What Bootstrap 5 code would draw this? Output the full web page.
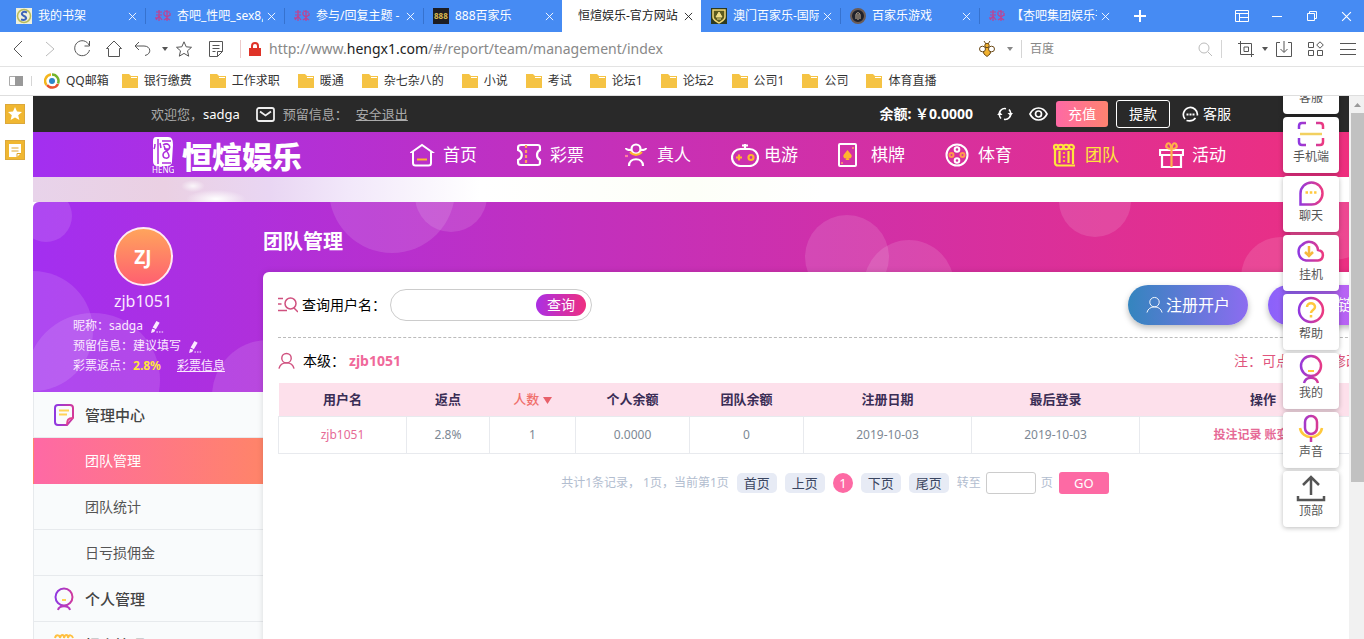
<!DOCTYPE html>
<html lang="zh-CN">
<head>
<meta charset="utf-8">
<meta name="viewport" content="width=device-width, initial-scale=1">
<title>恒煊娱乐-官方网站</title>
<link href="https://cdn.jsdelivr.net/npm/bootstrap@5.3.0/dist/css/bootstrap.min.css" rel="stylesheet">
<style>
:root{--pink:#fd6aa4;--grad:linear-gradient(90deg,#a32ff0,#c230bd 40%,#ee2f7e)}
body{font-family:"Noto Sans","Noto Sans CJK SC",sans-serif;font-size:12px;line-height:20px;color:#333;background:#fff}
svg{display:block;flex:none;fill:none;stroke:currentColor}
button{border:0;background:none;padding:0;color:inherit}
a{color:inherit;text-decoration:none}
/* browser frame */
.tabbar,.toolbar,.marks{flex:none}
.tabbar{height:32px;background:#468bf3;color:#fff;padding-left:6px}
.btab{width:139px;flex:none;padding:0 8px 0 10px;position:relative;white-space:nowrap}
.btab + .btab::before{content:"";position:absolute;left:0;top:8px;height:16px;border-left:1px solid #3672cf}
.btab.current{background:#fff;color:#222;padding-left:16px}
.btab.current::before,.btab.current + .btab::before{display:none}
.btitle{flex:1;min-width:0;overflow:hidden;margin:0 4px 0 6px}
.current .btitle{margin-left:0}
.winbtn{width:35px;height:32px}
.toolbar{height:35px;border-bottom:1px solid #e3e3e3;color:#555}
.toolset{padding-left:2px}
.tbtn{width:32px;height:34px}
.vline{height:18px;border-left:1px solid #d5d5d5}
.vline.rosy{border-color:#eccaca}
.vline.short{height:10px}
.address{font-size:14px;color:#888;width:100%}
.address b{font-weight:400;color:#222}
.engine-caret{color:#888;margin:0 8px 0 12px}
.searchbox{width:172px;border:0;outline:0;padding:0 8px;font-size:12px}
.searchbox::placeholder{color:#888}
.marks{height:29px;border-bottom:1px solid #dedede;color:#333;padding-left:1px}
.mark-item{gap:6px;margin-right:18px}
.mark-item.first{margin-right:13px}
.rail{width:33px;flex:none;padding:8px 0 0 5px;gap:16px}
.rail button{width:20px;height:20px;background:#f0b731;color:#fff;border:1px solid #dca83a}
/* site */
.site{position:relative;overflow:hidden;min-width:0}
.wrap{width:1080px;margin:0 auto}
.topbar{height:36px;background:#292929;color:#aaa;font-size:13px}
.money,.service{font-size:14px}
.btn-cash{width:54px;height:28px;border-radius:3px;font-size:14px;color:#fff}
.btn-cash.fill{width:52px;height:26px;background:linear-gradient(90deg,#fe69a5,#ff8370)}
.btn-cash.line{border:1px solid #fff}
.mainnav{height:45px;background:var(--grad);color:#fff}
.brand-name{font-family:"Noto Sans CJK SC",sans-serif;font-size:30px;font-weight:900;line-height:42px}
.navi{width:107px;font-size:17px;line-height:24px;gap:8px}
.navi.tight{gap:5px}
.navi.last{width:72px}
.navi.on{color:#ffe53b}
.ribbon{height:25px;background:radial-gradient(ellipse 12px 6px at 160px 9px,#fffc,#fff0),radial-gradient(ellipse 30px 9px at 183px 22px,#fff,#fff0),linear-gradient(90deg,#e8d3ea,#ead0e3 10%,#e9d6f3 18%,#f2e8fa 24%,#fff 34%,#fdfff8 50%,#fff 60%)}
.hero{min-width:1370px;position:relative;background:var(--grad) top/100% 190px no-repeat,#fff;border-top-left-radius:6px;overflow:hidden}
.bubbles{position:absolute;left:0;top:0;fill:#fff;fill-opacity:.12;stroke:none}
.side{width:230px;position:relative}
.profile{height:190px;color:#fbeaff;padding-top:25px}
.who{padding-right:10px}
.avatar{width:59px;height:59px;margin:0 auto;border:2px solid #ffe9f3;border-radius:50%;background:linear-gradient(#ffa45c,#ff6070);font-size:19px;font-weight:700;color:#fff}
.pname{font-size:16px;line-height:30px}
.pinfo{padding-left:40px}
.rate{color:#ffe53b}
.menu-row{height:46px;background:#f9fbfc;border-bottom:1px solid #e7eaed;border-left:1px solid #e7eaed;font-size:14px;color:#555;padding-left:51px}
.menu-row.head{font-size:15px;font-weight:500;color:#444;padding-left:20px;gap:11px}
.menu-row.on{background:linear-gradient(90deg,#fe69a5,#ff8469);color:#fff;border-color:#fff0}
.ptitle{height:70px;padding-top:10px;font-size:20px;font-weight:700;color:#fff}
.panel{background:#fff;border-top-left-radius:6px;padding:0 15px;min-height:520px;box-shadow:0 0 6px #0002;font-size:14px}
.rose{color:#d0517f}
.qrow{height:66px;border-bottom:1px dashed #bbb}
.levelrow{height:45px}
.level-name{color:#f0689a}
.note{color:#e0557d}
.qbox{width:202px;height:32px;border:1px solid #ccc;border-radius:16px;padding:0 5px 0 12px}
.qbox input{width:132px;border:0;outline:0}
.qbox button{width:50px;height:22px;border-radius:11px;color:#fff;background:linear-gradient(90deg,#ab2fe4,#ee2f80)}
.pills{gap:20px}
.pill{width:120px;height:40px;border-radius:20px;color:#fff;font-size:16px;box-shadow:0 3px 6px #0004;gap:3px}
.pill.a{background:linear-gradient(90deg,#3485be,#8c6cf0)}
.pill.b{background:linear-gradient(90deg,#8a62fa,#d063f0)}
.grid{table-layout:fixed;width:1109px;margin:0;text-align:center;font-size:12px}
.grid th{height:33px;padding:0;background:#fde0eb;color:#3a2d55;font-size:13px;font-weight:700;border:0;vertical-align:middle}
.grid th.sorted{color:#f0706c;font-weight:500}
.grid td{height:37px;padding:0;border:1px solid #e8eaee;color:#7d8894;vertical-align:middle}
.grid .hot{color:#e66a96}
.w1{width:128px}.w2{width:83px}.w3{width:86px}.w4{width:114px}.w5{width:168px}
.pager{font-size:12px;color:#b2bdcf;padding:18px 0 0 4px}
.pager button{width:40px;height:20px;border-radius:5px;background:#e7ebf5;color:#3a4560;font-size:13px;margin-left:8px}
.pager .cur{width:20px;border-radius:50%;background:var(--pink);color:#fff}
.pager input{width:50px;height:22px;border:1px solid #ccc;border-radius:3px;margin:0 5px}
.pager .go{width:50px;height:22px;border-radius:3px;background:var(--pink);color:#fff;margin-left:6px}
.floats{position:absolute;right:10px;top:-38px;gap:3px}
.floats button{width:56px;height:56px;border-radius:4px;background:#fff;box-shadow:0 1px 5px #0004;color:#555;line-height:18px;padding-bottom:6px}
.floats svg{margin:0 auto}
.sbar{width:15px;flex:none;background:#f1f1f1;padding-left:2px}
.sbar .arrow{height:17px}
.sbar .thumb{height:68%;background:#c1c1c1}
</style>
</head>
<body>
<svg width="0" height="0" class="position-absolute" aria-hidden="true">
  <defs>
    <linearGradient id="gp" gradientUnits="userSpaceOnUse" x1="2" y1="0" x2="26" y2="0"><stop stop-color="#9038e0"/><stop offset="1" stop-color="#ec3a80"/></linearGradient>
    <symbol id="folder" viewBox="0 0 16 14"><path d="M0 0h7l2 2h7v12H0z" fill="#f5c344" stroke="none"/><path d="M9 3.5h6" stroke="#fff"/></symbol>
    <symbol id="close" viewBox="0 0 10 10"><path d="M1 1l8 8M9 1l-8 8"/></symbol>
    <symbol id="caret" viewBox="0 0 6 4"><path d="M0 0h6L3 4z" fill="currentColor" stroke="none"/></symbol>
    <symbol id="fav" viewBox="0 0 16 12"><g stroke="#d8327c" stroke-width="1.2" opacity=".85"><path d="M1 2h6M4 0v11M1 5h6M1 10l3-4 3 4M9 1l6 1M9 5l3 2 3-2M9 10l3-2 3 2M12 0v11M9 2v3M15 3v3M1 7v2"/></g></symbol>
    <symbol id="person" viewBox="0 0 18 18"><circle cx="9" cy="6" r="5"/><path d="M1 17c1-4 4-6 8-6s7 2 8 6"/></symbol>
    <symbol id="pencil" viewBox="0 0 12 12"><path d="M0 12l1-4 3 1-1 2zM1.500 7L5 1l3 1.500-3.500 6z" fill="currentColor" stroke="none"/><path d="M5 11h7" stroke-dasharray="1.4 1"/></symbol>
  </defs>
</svg>

<div class="d-flex flex-column vh-100 overflow-hidden">
  <!-- tabs -->
  <header class="tabbar d-flex">
    <div class="btab d-flex align-items-center"><svg width="16" height="16"><path d="M0 0h16v16H0z" fill="#eef0dc" stroke="none"/><circle cx="8" cy="8" r="6.500" stroke="#b9bb5a" stroke-width="1.500"/><path d="M11 4.500c-5-2-7 2-3 3.500s2 5-3 3.500" stroke="#3c62b8" stroke-width="2"/></svg><span class="btitle">我的书架</span><button aria-label="关闭"><svg width="9" height="9"><use href="#close"/></svg></button></div>
    <div class="btab d-flex align-items-center"><svg width="16" height="12"><use href="#fav"/></svg><span class="btitle">杏吧_性吧_sex8,</span><button aria-label="关闭"><svg width="9" height="9"><use href="#close"/></svg></button></div>
    <div class="btab d-flex align-items-center"><svg width="16" height="12"><use href="#fav"/></svg><span class="btitle">参与/回复主题 -</span><button aria-label="关闭"><svg width="9" height="9"><use href="#close"/></svg></button></div>
    <div class="btab d-flex align-items-center"><svg width="16" height="16"><path d="M0 0h16v16H0z" fill="#1d1d22" stroke="none"/><text x="1" y="11" font-size="8" font-weight="700" fill="#d9b950" stroke="none">888</text></svg><span class="btitle">888百家乐</span><button aria-label="关闭"><svg width="9" height="9"><use href="#close"/></svg></button></div>
    <div class="btab current d-flex align-items-center"><span class="btitle">恒煊娱乐-官方网站</span><button aria-label="关闭"><svg width="9" height="9"><use href="#close"/></svg></button></div>
    <div class="btab d-flex align-items-center"><svg width="16" height="16"><path d="M0 0h16v16H0z" fill="#2d3a1e" stroke="none"/><path d="M2 2h12v7c0 3-3 4-6 6-3-2-6-3-6-6z" fill="#5c5a1f" stroke="#f0d87a" stroke-width="1.500"/><path d="M5 9l3-5 3 5zM6 11h4" fill="#f2df8a" stroke="#f2df8a"/></svg><span class="btitle">澳门百家乐-国际</span><button aria-label="关闭"><svg width="9" height="9"><use href="#close"/></svg></button></div>
    <div class="btab d-flex align-items-center"><svg width="16" height="16"><circle cx="8" cy="8" r="7" fill="#20222c" stroke="#6b5b55" stroke-width="2"/><path d="M6 11V7c0-3 4-3 4 0v4M8 6v6" stroke="#c9b59a"/></svg><span class="btitle">百家乐游戏</span><button aria-label="关闭"><svg width="9" height="9"><use href="#close"/></svg></button></div>
    <div class="btab d-flex align-items-center"><svg width="16" height="12"><use href="#fav"/></svg><span class="btitle">【杏吧集团娱乐平</span><button aria-label="关闭"><svg width="9" height="9"><use href="#close"/></svg></button></div>
    <button class="d-flex align-items-center ps-3" aria-label="新标签"><svg width="12" height="12"><path d="M6 0v12M0 6h12" stroke-width="2"/></svg></button>
    <div class="ms-auto d-flex">
      <button class="winbtn d-flex align-items-center justify-content-center" aria-label="布局"><svg width="14" height="12"><path d="M.5.500h13v11H.5zM.5 3.500h13M4.500 3.500v8M4.500 7.500h9"/></svg></button>
      <button class="winbtn d-flex align-items-center justify-content-center" aria-label="最小化"><svg width="10" height="10"><path d="M0 5.500h10"/></svg></button>
      <button class="winbtn d-flex align-items-center justify-content-center" aria-label="还原"><svg width="10" height="10"><path d="M.5 2.500h7v7h-7zM2.500 2V.5h7v7H8"/></svg></button>
      <button class="winbtn d-flex align-items-center justify-content-center" aria-label="关闭窗口"><svg width="11" height="11"><use href="#close"/></svg></button>
    </div>
  </header>

  <!-- address bar -->
  <div class="toolbar d-flex align-items-center">
    <div class="toolset d-flex">
      <button class="tbtn d-grid" aria-label="后退"><svg class="m-auto" width="10" height="18"><path d="M9 1L1 9l8 8"/></svg></button>
      <button class="tbtn d-grid" aria-label="前进"><svg class="m-auto" width="10" height="16"><path d="M1 1l8 7-8 7" stroke="#bbb"/></svg></button>
      <button class="tbtn d-grid" aria-label="刷新"><svg class="m-auto" width="18" height="18"><path d="M16 5A7.500 7.500 0 1 0 16.500 10M16.500 1v5h-5"/></svg></button>
      <button class="tbtn d-grid" aria-label="主页"><svg class="m-auto" width="16" height="18"><path d="M.5 8.500L8 1l7.500 7.500h-2v8h-11v-8z"/></svg></button>
      <button class="tbtn d-grid" aria-label="撤销"><svg class="me-2 my-auto ms-1" width="18" height="16"><path d="M5 1L1 5l4 4M1 5h9c7 0 8 8 1 9.500"/></svg></button>
      <svg class="my-auto" width="6" height="4"><use href="#caret"/></svg>
      <button class="tbtn d-grid" aria-label="收藏"><svg class="m-auto" width="16" height="16"><path d="M8 .8l2.200 5 5.300.5-4 3.500 1.200 5.400L8 12.400l-4.700 2.800 1.200-5.400-4-3.500 5.300-.5z"/></svg></button>
      <button class="tbtn d-grid" aria-label="笔记"><svg class="m-auto" width="14" height="16"><path d="M.5.500h13v10l-5 5h-8zM13.500 10.500h-5v5M3.500 4.500h7M3.500 7.500h7M3.500 10.500h3"/></svg></button>
    </div>
    <div class="vline rosy ms-2"></div>
    <div class="d-flex align-items-center flex-grow-1 ms-1 ps-1 gap-2">
      <svg width="12" height="14"><path d="M0 6h12v8H0z" fill="#df3328" stroke="none"/><path d="M3 7V4c0-4 6-4 6 0v3" stroke="#df3328" stroke-width="2"/></svg>
      <div class="address">http://www.<b>hengx1.com</b>/#/report/team/management/index</div>
    </div>
    <svg width="16" height="16"><g stroke="#6b4a17"><path d="M5 0l2 3M11 0L9 3"/><path d="M8 5l4 4-1 4-3 2.500L5 13 4 9z" fill="#f2b22e"/><ellipse cx="3.500" cy="8" rx="3" ry="2.800" fill="#fff"/><ellipse cx="12.500" cy="8" rx="3" ry="2.800" fill="#fff"/><circle cx="8" cy="4.500" r="2.200" fill="#f0b02c"/></g></svg>
    <svg class="engine-caret" width="6" height="4"><use href="#caret"/></svg>
    <div class="vline"></div>
    <input class="searchbox" type="text" placeholder="百度" aria-label="搜索">
    <svg width="15" height="15" class="ms-1 text-black-50"><circle cx="6" cy="6" r="5" stroke="#bbb"/><path d="M10 10l4 4" stroke="#bbb"/></svg>
    <div class="vline ms-2"></div>
    <button class="ms-3" aria-label="截图"><svg width="16" height="16"><path d="M0 2.500h13.500V16M2.500 0v13.500H16M6 6h4.500v4.500H6z"/></svg></button>
    <svg class="ms-2" width="6" height="4"><use href="#caret"/></svg>
    <button class="tbtn d-grid" aria-label="下载"><svg class="m-auto" width="16" height="16"><path d="M4 1.500H.5v14h15v-14H12M8 0v11M4.500 8L8 11.500 11.500 8"/></svg></button>
    <button class="tbtn d-grid" aria-label="扩展"><svg class="m-auto" width="16" height="16"><path d="M.5 1.500h5v5h-5zM.5 9.500h5v5h-5zM9.500 9.500h5v5h-5zM12 .8L15.300 4 12 7.200 8.700 4z"/></svg></button>
    <button class="tbtn d-grid" aria-label="菜单"><svg class="m-auto" width="16" height="14"><path d="M0 1.500h16M0 7.500h16M0 12.500h16"/></svg></button>
  </div>

  <!-- bookmarks -->
  <nav class="marks d-flex align-items-center">
    <svg class="ms-2" width="14" height="10"><path d="M.5.500h13v9H.5z" stroke="#aaa"/><path d="M6 0h8v10H6z" fill="#999" stroke="none"/></svg>
    <div class="vline short ms-2 me-1"></div>
    <a href="#" class="mark-item first d-flex align-items-center ms-2"><svg width="16" height="16" stroke-width="2.500"><path d="M8 1.500a6.500 6.500 0 0 1 6 9" stroke="#76b52b"/><path d="M14 11a6.500 6.500 0 0 1-11 1" stroke="#e8542f"/><path d="M2.500 12A6.500 6.500 0 0 1 7 1.500" stroke="#f4b61d"/><circle cx="8" cy="8" r="3" fill="#2d87c9" stroke="none"/></svg>QQ邮箱</a>
    <a href="#" class="mark-item d-flex align-items-center"><svg width="16" height="14"><use href="#folder"/></svg>银行缴费</a>
    <a href="#" class="mark-item d-flex align-items-center"><svg width="16" height="14"><use href="#folder"/></svg>工作求职</a>
    <a href="#" class="mark-item d-flex align-items-center"><svg width="16" height="14"><use href="#folder"/></svg>暖通</a>
    <a href="#" class="mark-item d-flex align-items-center"><svg width="16" height="14"><use href="#folder"/></svg>杂七杂八的</a>
    <a href="#" class="mark-item d-flex align-items-center"><svg width="16" height="14"><use href="#folder"/></svg>小说</a>
    <a href="#" class="mark-item d-flex align-items-center"><svg width="16" height="14"><use href="#folder"/></svg>考试</a>
    <a href="#" class="mark-item d-flex align-items-center"><svg width="16" height="14"><use href="#folder"/></svg>论坛1</a>
    <a href="#" class="mark-item d-flex align-items-center"><svg width="16" height="14"><use href="#folder"/></svg>论坛2</a>
    <a href="#" class="mark-item d-flex align-items-center"><svg width="16" height="14"><use href="#folder"/></svg>公司1</a>
    <a href="#" class="mark-item d-flex align-items-center"><svg width="16" height="14"><use href="#folder"/></svg>公司</a>
    <a href="#" class="mark-item d-flex align-items-center"><svg width="16" height="14"><use href="#folder"/></svg>体育直播</a>
  </nav>

  <div class="d-flex flex-grow-1 overflow-hidden">
    <aside class="rail d-flex flex-column">
      <button class="d-grid" aria-label="收藏夹"><svg class="m-auto" width="14" height="14"><path d="M7 0l2 4.500 5 .5-3.800 3.300L11.400 13 7 10.500 2.600 13l1.200-4.700L0 5l5-.5z" fill="#fff" stroke="none"/></svg></button>
      <button class="d-grid" aria-label="便签"><svg class="m-auto" width="12" height="13"><path d="M0 0h12v9l-4 4H0z" fill="#fff" stroke="none"/><path d="M2.500 4h7M2.500 7h7M8 13V9.500h4" stroke="#e0a52a"/></svg></button>
    </aside>

    <main class="site flex-grow-1">
      <div class="topbar"><div class="wrap h-100 d-flex align-items-center">
        <span>欢迎您，</span><span class="text-white">sadga</span>
        <svg class="mx-3 me-2" width="19" height="15" stroke="#eee"><g stroke="#eee" stroke-width="1.800"><rect x="1" y="1" width="17" height="13" rx="2"/><path d="M4 4.500l5.500 4 5.500-4"/></g></svg>
        <span>预留信息：</span><a href="#" class="ms-2 text-decoration-underline">安全退出</a>
        <div class="ms-auto d-flex align-items-center text-white">
          <b class="money">余额: ￥0.0000</b>
          <button class="ms-4" aria-label="刷新余额"><svg width="16" height="14"><path d="M2.500 8.500A5.500 5.500 0 0 1 9 1.700M13.500 5.500A5.500 5.500 0 0 1 7 12.300M12 2.500a5.500 5.500 0 0 1 1.500 3M4 11.500a5.500 5.500 0 0 1-1.500-3" stroke-width="1.600"/><path d="M10.500 6h5.500l-2.500 3zM0 8h5.500L3 5z" fill="#fff" stroke="none"/></svg></button>
          <button class="mx-3 me-2" aria-label="显示余额"><svg width="19" height="14"><g stroke-width="1.700"><path d="M1 7c4-8 13-8 17 0-4 8-13 8-17 0z"/><circle cx="9.500" cy="7" r="3"/></g></svg></button>
          <button class="btn-cash fill me-2">充值</button>
          <button class="btn-cash line">提款</button>
          <a href="#" class="service d-flex align-items-center ms-2 ps-1 gap-1"><svg width="17" height="16"><path d="M3 13A7 7 0 1 1 15.300 9.500M13.500 12c-2 2.500-5 3.500-9 2.500" stroke-width="1.700"/><path d="M4.500 8.500h2M7.500 8.500h2M10.500 8.500h2" stroke-width="2"/></svg>客服</a>
        </div>
      </div></div>

      <div class="mainnav"><div class="wrap h-100 d-flex align-items-center">
        <a href="#" class="d-flex align-items-center gap-2">
          <svg width="23" height="38"><path d="M5 1h12c4 0 5 3 5 8l-1 16c0 4-2 5-6 5H7c-4 0-5-2-5-6V8c0-4 0-7 3-7z" fill="#fff" stroke="none"/><g stroke="#ad2fdc" stroke-width="1.500"><path d="M7 3v25M4 8c0 3-1 5-1 5M9 7l1 5M11 5h9M11 27h9M12 9c5-3 8 1 6 4s-6 2-6 6 6 4 6 1-4-6-5-10M13 13h5"/></g><text x="1" y="37" font-size="8" fill="#fff" stroke="none">HENG</text></svg>
          <span class="brand-name">恒煊娱乐</span></a>
        <nav class="ms-auto d-flex">
          <a href="#" class="navi d-flex align-items-center"><svg width="25" height="24" stroke-width="2"><path d="M2 9l10-7 10 7h-1v11c0 2-1 2.500-2.500 2.500h-13C4 22.500 3 22 3 20V9z"/><path d="M7 16.500h10" stroke="#ffb52e"/></svg>首页</a>
          <a href="#" class="navi d-flex align-items-center"><svg width="25" height="24" stroke-width="2.200"><path d="M4 2h17c2 0 2 1 2 5-4 2-4 8 0 10 0 4 0 5-2 5H4c-3 0-3-1-3-5 5-2 5-8 0-10 0-4 0-5 3-5z"/><path d="M9 2v20" stroke="#ffa060" stroke-dasharray="3 2"/></svg>彩票</a>
          <a href="#" class="navi d-flex align-items-center"><svg width="25" height="24" stroke-width="2.200"><circle cx="12" cy="6" r="4.500"/><path d="M2 5c0 2 3 2 5 2M22 5c0 2-3 2-5 2M5 23c0-9 14-9 14 0"/><path d="M6 9c4 4 8 4 12 0" stroke="#ffb52e"/><path d="M1 13h3" stroke="#ff7fa0"/></svg>真人</a>
          <a href="#" class="navi tight d-flex align-items-center"><svg width="28" height="24" stroke-width="2.200"><rect x="1" y="6" width="26" height="17" rx="8.500"/><path d="M14 6V1M11 2.500h6"/><path d="M5 14.500h6M8 11.500v6" stroke="#ffb52e"/><circle cx="20" cy="14.500" r="2.500" stroke="#ffb52e"/></svg>电游</a>
          <a href="#" class="navi d-flex align-items-center"><svg width="25" height="24" stroke-width="2"><rect x="1" y="1" width="17" height="22" rx="1"/><path d="M9.500 7l4 5c1 3-2 4-3 3l1 2h-4l1-2c-1 1-4 0-3-3z" fill="#ffb52e" stroke="none"/><path d="M15 4v2M4 19v2" stroke="#ff9c6a" stroke-width="1.500"/></svg>棋牌</a>
          <a href="#" class="navi d-flex align-items-center"><svg width="25" height="24" stroke-width="2"><circle cx="12" cy="12" r="10.500"/><circle cx="12" cy="6.500" r="2.300"/><circle cx="12" cy="17.500" r="2.300"/><g stroke="#ff9a4e"><circle cx="6.500" cy="12" r="2"/><circle cx="17.500" cy="12" r="2"/></g></svg>体育</a>
          <a href="#" class="navi on d-flex align-items-center"><svg width="25" height="24" stroke-width="2.200"><path d="M3 6v14c0 1 1 2.500 3 2.500h17M21 6v15M2 4c0-3 4-3 4 0 0-3 5-3 5.500 0 0-3 5-3 5.500 0 0-3 4-3 5 0 0 3-4 3-5 0 0 3-5 3-5.500 0C11 7 6 7 6 4c0 3-4 3-4 0M7.500 8v12M16.500 8v12"/><path d="M12 9v12" stroke="#ffb52e" stroke-dasharray="2 2"/></svg>团队</a>
          <a href="#" class="navi last d-flex align-items-center"><svg width="25" height="26" stroke-width="2.200"><path d="M1 8h23v5H1zM3 13v12h19V13"/><path d="M12.500 7v18M12.500 7C8 7 6 5 8 2c2-2 4 0 4.500 5 .5-5 2.500-7 4.500-5 2 3 0 5-4.500 5z" stroke="#ffb04a"/></svg>活动</a>
        </nav>
      </div></div>
      <div class="ribbon"></div>

      <div class="hero">
        <svg class="bubbles" width="1370" height="190"><circle cx="13" cy="14" r="26"/><circle cx="0" cy="129" r="60"/><circle cx="60" cy="178" r="67"/><circle cx="235" cy="194" r="56"/><circle cx="359" cy="-12" r="63"/><circle cx="418" cy="-6" r="36"/><circle cx="814" cy="55" r="42"/><circle cx="876" cy="83" r="45"/><circle cx="1062" cy="-1" r="36"/><circle cx="1248" cy="75" r="40"/><circle cx="1300" cy="10" r="48"/></svg>
        <div class="d-flex">
          <div class="side">
            <div class="profile">
              <div class="who text-center">
                <div class="avatar d-flex align-items-center justify-content-center">ZJ</div>
                <div class="pname">zjb1051</div>
              </div>
              <div class="pinfo">
                <div class="d-flex align-items-center">昵称：sadga<button class="ms-2" aria-label="修改昵称"><svg width="13" height="13"><use href="#pencil"/></svg></button></div>
                <div class="d-flex align-items-center">预留信息：建议填写<button class="ms-2" aria-label="修改预留信息"><svg width="13" height="13"><use href="#pencil"/></svg></button></div>
                <div>彩票返点：<b class="rate">2.8%</b><a href="#" class="ms-3 text-decoration-underline">彩票信息</a></div>
              </div>
            </div>
            <a href="#" class="menu-row head d-flex align-items-center"><svg width="20" height="22" stroke-width="2"><path d="M4 1h12c2 0 3 1 3 3v10l-6 7H4c-2 0-3-1-3-3V4c0-2 1-3 3-3z" stroke="url(#gp)"/><path d="M13 21c0-5 1-7 6-7" stroke="#e0408e"/><path d="M5 6.500h10M5 10.500h8" stroke="#ffd257"/></svg>管理中心</a>
            <a href="#" class="menu-row on d-flex align-items-center">团队管理</a>
            <a href="#" class="menu-row d-flex align-items-center">团队统计</a>
            <a href="#" class="menu-row d-flex align-items-center">日亏损佣金</a>
            <a href="#" class="menu-row head d-flex align-items-center"><svg width="20" height="24" stroke-width="2"><circle cx="10" cy="10" r="8.500" stroke="url(#gp)"/><path d="M4 23c1-5 11-5 12 0" stroke="#b83ac0"/><path d="M8 13h4" stroke="#ffd257"/></svg>个人管理</a>
            <a href="#" class="menu-row head d-flex align-items-center"><svg width="20" height="22" stroke-width="2"><path d="M3 5v13c0 2 1 3 3 3h11V5" stroke="url(#gp)"/><path d="M1 4c1-4 5-3 5 0 1-4 4-4 4 0 1-4 4-4 4 0 1-4 4-3 5 0" stroke="#ffc040"/></svg>报表管理</a>
          </div>

          <section class="flex-grow-1 position-relative">
            <h1 class="ptitle m-0 d-flex align-items-center">团队管理</h1>
            <div class="panel">
              <div class="qrow d-flex align-items-center">
                <svg class="rose" width="20" height="16" stroke-width="1.500"><circle cx="12.500" cy="6.500" r="5.500"/><path d="M16 11l4 4M0 1.500h5M0 7h3.500M0 13.500h9"/></svg>
                <label for="q" class="ms-1 text-black">查询用户名：</label>
                <div class="qbox d-flex align-items-center justify-content-between ms-1"><input id="q" type="text"><button>查询</button></div>
                <div class="pills ms-auto d-flex">
                  <button class="pill a d-flex align-items-center justify-content-center"><svg width="17" height="18"><use href="#person"/></svg>注册开户</button>
                  <button class="pill b d-flex align-items-center justify-content-center"><svg width="17" height="18"><use href="#person"/></svg>推广链接</button>
                </div>
              </div>
              <div class="levelrow d-flex align-items-center">
                <svg class="rose" width="17" height="18" stroke-width="1.500"><use href="#person"/></svg>
                <span class="text-black ms-2 me-1">本级：</span><b class="level-name">zjb1051</b>
                <span class="note ms-auto">注：可点击返点修改返点</span>
              </div>
              <table class="grid">
                <colgroup><col class="w1"><col class="w2"><col class="w3"><col class="w4"><col class="w4"><col class="w5"><col class="w5"><col></colgroup>
                <thead><tr><th>用户名</th><th>返点</th><th class="sorted">人数 <svg class="d-inline" width="9" height="7"><path d="M0 0h9L4.500 7z" fill="#e8606a" stroke="none"/></svg></th><th>个人余额</th><th>团队余额</th><th>注册日期</th><th>最后登录</th><th>操作</th></tr></thead>
                <tbody><tr><td><a href="#" class="hot">zjb1051</a></td><td>2.8%</td><td>1</td><td>0.0000</td><td>0</td><td>2019-10-03</td><td>2019-10-03</td><td><a href="#" class="hot fw-bold">投注记录</a> <a href="#" class="hot fw-bold">账变记录</a></td></tr></tbody>
              </table>
              <div class="pager d-flex align-items-center justify-content-center">
                <span>共计1条记录， 1页，当前第1页</span>
                <button>首页</button><button>上页</button><button class="cur">1</button><button>下页</button><button>尾页</button>
                <label for="pg" class="ms-2">转至</label><input id="pg" type="text"><span>页</span><button class="go">GO</button>
              </div>
            </div>
          </section>
        </div>
      </div>

      <div class="floats d-flex flex-column">
        <button><svg width="28" height="30"></svg>客服</button>
        <button><svg width="28" height="30" stroke-width="2.500"><path d="M2 11V8c0-2 1-3 3-3h4M19 5h4c2 0 3 1 3 3v3M26 20v4c0 2-1 3-3 3h-4M9 27H5c-2 0-3-1-3-3v-4" stroke="url(#gp)"/><path d="M3 16h22" stroke="#f2d060"/></svg>手机端</button>
        <button><svg width="28" height="30" stroke-width="2.500"><path d="M3.500 27.500V16.500A11 11 0 1 1 14.500 27.500z" stroke="url(#gp)"/><path d="M8.500 15.500h11" stroke="#ffc83c" stroke-dasharray="2.500 1.800"/></svg>聊天</button>
        <button><svg width="28" height="30" stroke-width="2.500"><path d="M9 24.500C0 23 0 12 5 9c6-6 15-3 16 5 7 1 6 10 0 10.500z" stroke="url(#gp)"/><path d="M12 10v9M8 16l4 4 4-4" stroke="#f5b93c"/></svg>挂机</button>
        <button><svg width="28" height="30" stroke-width="2.500"><circle cx="14" cy="15" r="12" stroke="url(#gp)"/><path d="M10 12c0-5 8-5 8 0 0 3-4 3-4 6M14 20v2.500" stroke="#ffc83c"/></svg>帮助</button>
        <button><svg width="28" height="30" stroke-width="2.500"><circle cx="14" cy="12" r="10" stroke="url(#gp)"/><path d="M7 29c2-7 12-7 14 0" stroke="url(#gp)"/><path d="M11 17h6" stroke="#ffc83c" stroke-width="2"/></svg>我的</button>
        <button><svg width="28" height="30" stroke-width="2.500"><rect x="8" y="3" width="12" height="18" rx="6" stroke="url(#gp)"/><path d="M3 15c2 12 20 12 22 0" stroke="#ffc83c"/><path d="M14 24v5" stroke="#c83aa5"/></svg>声音</button>
        <button><svg width="30" height="30" stroke-width="2.500"><path d="M15 23V5M7 13l8-8 8 8M2 24v4h26v-4"/></svg>顶部</button>
      </div>
    </main>

    <div class="sbar" aria-hidden="true"><div class="arrow d-grid"><svg class="m-auto" width="7" height="4"><path d="M0 4h7L3.500 0z" fill="#999" stroke="none"/></svg></div><div class="thumb"></div></div>
  </div>
</div>
<script src="https://cdn.jsdelivr.net/npm/bootstrap@5.3.0/dist/js/bootstrap.bundle.min.js"></script>
</body>
</html>
